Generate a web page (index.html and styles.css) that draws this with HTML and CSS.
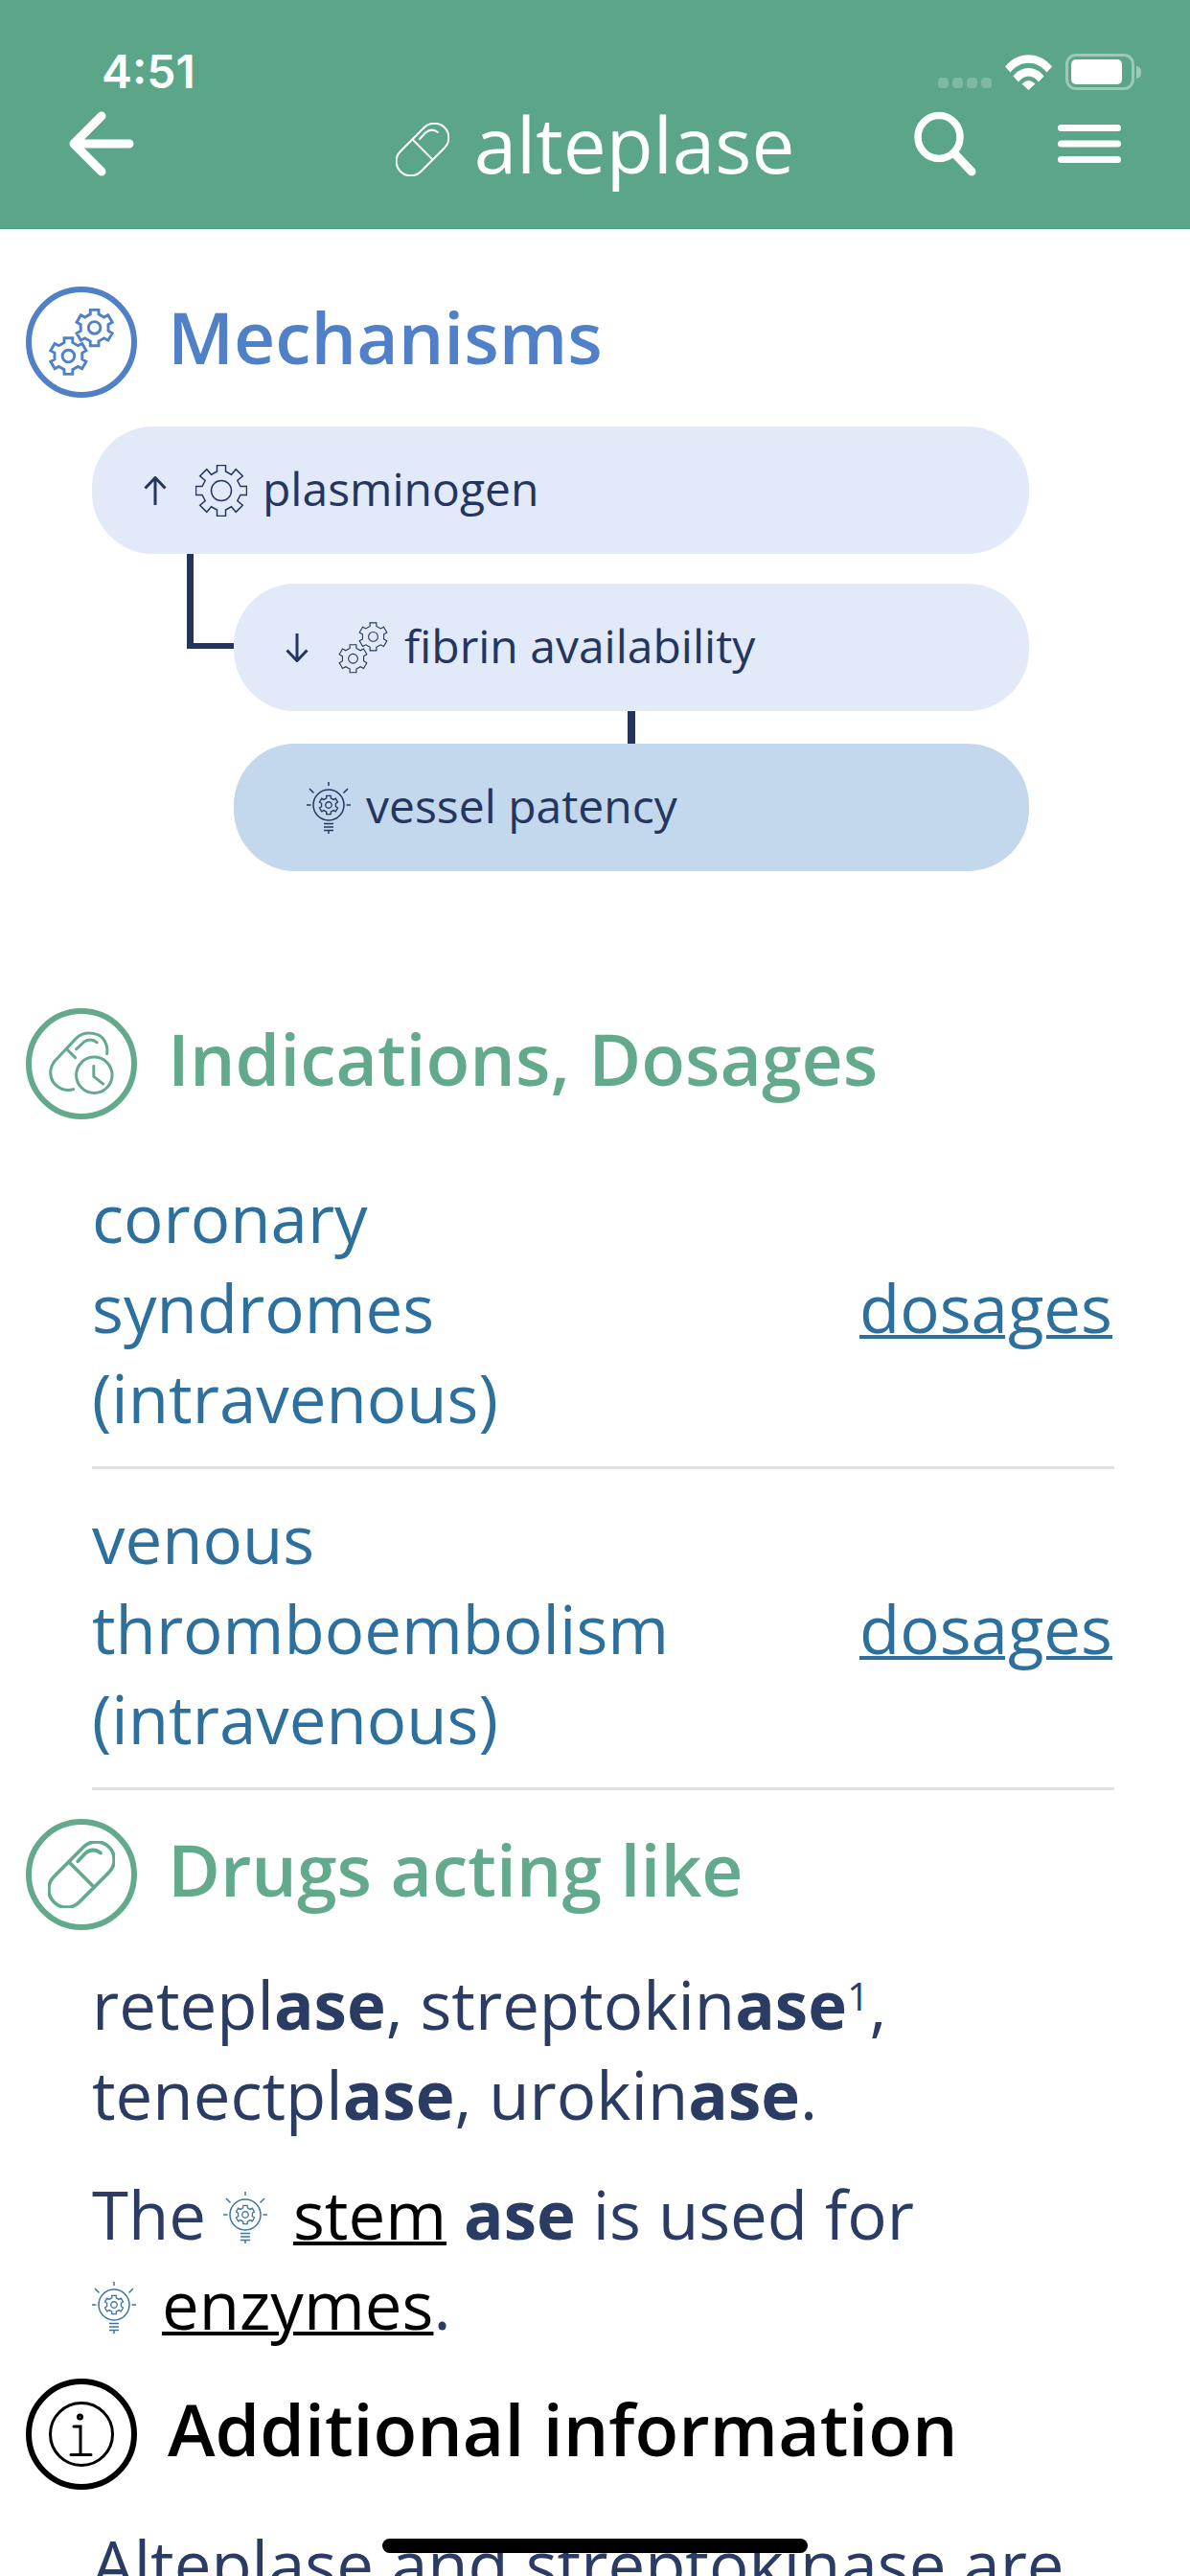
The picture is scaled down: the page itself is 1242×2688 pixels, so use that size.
FILE: index.html
```
<!DOCTYPE html>
<html lang="en">

<head>
    <meta charset="UTF-8">
    <meta name="viewport" content="width=device-width, initial-scale=1.0">
    <title>alteplase</title>
    <link rel="stylesheet" href="styles.css">
</head>

<body>
    <!-- shared icons -->
    <svg class="sprite" aria-hidden="true">
        <symbol id="cog" viewBox="-27 -27 54 54">
            <path d="M-4.5-26.5 4.5-26.5 4.5-20 10.5-16.8 15.2-22.3 22.3-15.2 16.8-10.5 20-4.5 26.5-4.5 26.5 4.5 20 4.5 16.8 10.5 22.3 15.2 15.2 22.3 10.5 16.8 4.5 20 4.5 26.5-4.5 26.5-4.5 20-10.5 16.8-15.2 22.3-22.3 15.2-16.8 10.5-20 4.5-26.5 4.5-26.5-4.5-20-4.5-16.8-10.5-22.3-15.2-15.2-22.3-10.5-16.8-4.5-20z" />
            <circle r="10.5" />
        </symbol>
        <symbol id="cogs" viewBox="0 0 70 72">
            <g id="small-cog" transform="translate(49 20.5)">
                <path d="M-4.5-19.3 4.5-19.3 4.5-14.5 10.3-11.2 14.6-13.6 19.1-5.9 14.8-3.4 14.8 3.4 19.1 5.9 14.6 13.6 10.3 11.2 4.5 14.5 4.5 19.3-4.5 19.3-4.5 14.5-10.3 11.2-14.6 13.6-19.1 5.9-14.8 3.4-14.8-3.4-19.1-5.9-14.6-13.6-10.3-11.2-4.5-14.5z" />
                <circle r="6.5" />
            </g>
            <use href="#small-cog" x="-28" y="30.5" />
        </symbol>
        <symbol id="bulb" viewBox="0 0 46 54">
            <circle cx="23" cy="24" r="16" />
            <path d="M23 0v4M3 7l4.5 4.5M43 7l-4.5 4.5M0 24h4.5M41.5 24h4.5M18 43.5h10M18 47h10M18 50.5h10M23 50.5v3.5" />
            <g transform="translate(23 24) scale(.5)" stroke-width="2.6">
                <path d="M-4.5-19.3 4.5-19.3 4.5-14.5 10.3-11.2 14.6-13.6 19.1-5.9 14.8-3.4 14.8 3.4 19.1 5.9 14.6 13.6 10.3 11.2 4.5 14.5 4.5 19.3-4.5 19.3-4.5 14.5-10.3 11.2-14.6 13.6-19.1 5.9-14.8 3.4-14.8-3.4-19.1-5.9-14.6-13.6-10.3-11.2-4.5-14.5z" />
                <circle r="6.5" />
            </g>
        </symbol>
        <symbol id="capsule" viewBox="0 0 56 56">
            <rect x="13" y="-4.5" width="30" height="65" rx="15" transform="rotate(45 28 28)" />
            <path d="M17.4 17.4l21.2 21.2M25 17l6-6.5q6.5-5.5 13-.5" />
        </symbol>
        <symbol id="dosage" viewBox="49 45 71 71">
            <path d="M111.5 70C113 60 108 52 101 49.5C92 46.5 84 48.5 79 53.5L56 78C50.5 85 50.5 94 55 100.5C60 107 68 110 76 107.5M70 66l8 8M79 65l8-7.5q7-5 14 .5" />
            <circle cx="98" cy="92.5" r="19" />
            <path d="M97.5 83v11l10 8" />
        </symbol>
        <symbol id="info" viewBox="-35 -35 70 70">
            <circle r="32.5" />
            <circle cx="-1.5" cy="-18" r="2" />
            <path d="M-8-8h7v29.5M-11 21.5h21" />
        </symbol>
    </svg>

    <div class="app">
        <header class="header">
            <div class="status">
                <span class="time">4:51</span>
                <div class="status-icons">
                    <span class="signal"><i></i><i></i><i></i><i></i></span>
                    <svg class="wifi" viewBox="0 0 49 37" aria-hidden="true">
                        <path d="M0 12.5C13-4 36-4 49 12.5L43.5 18.5C33 5.5 16 5.5 5.5 18.5z" />
                        <path d="M8.5 22.5C17 11 32 11 40.5 22.5L35 28.5C29 20.5 20 20.5 14 28.5z" />
                        <path d="M17.5 30.5Q24.5 23.5 31.5 30.5L24.5 37z" />
                    </svg>
                    <span class="battery"><span class="battery-level"></span></span>
                    <span class="battery-cap"></span>
                </div>
            </div>
            <nav class="nav">
                <button class="nav-button" aria-label="Back">
                    <svg width="68" height="68" viewBox="0 0 68 68"><path stroke-width="9" d="M63 34H5M34 5L5 34l29 29" /></svg>
                </button>
                <h1 class="title">
                    <svg class="title-icon"><use href="#capsule" /></svg>alteplase
                </h1>
                <div class="nav-actions">
                    <button class="nav-button" aria-label="Search">
                        <svg width="66" height="68" viewBox="0 0 66 68"><ellipse cx="26" cy="27" rx="22" ry="22.5" stroke-width="7.5" /><path stroke-width="9" d="M43 45l17 18" /></svg>
                    </button>
                    <button class="nav-button" aria-label="Menu">
                        <svg width="66" height="40" viewBox="0 0 66 40"><path stroke-width="7" d="M3.5 3.5h59M3.5 20h59M3.5 36.5h59" /></svg>
                    </button>
                </div>
            </nav>
        </header>

        <main class="content">
            <section class="mechanisms">
                <div class="section-head blue">
                    <span class="badge"><svg><use href="#cogs" /></svg></span>
                    <h2>Mechanisms</h2>
                </div>
                <div class="tree">
                    <div class="node">
                        <svg class="arrow" viewBox="0 0 24 30"><path d="M12 30V2M1.5 12.5L12 1.5l10.5 11" /></svg>
                        <svg class="node-icon"><use href="#cog" /></svg>
                        <span class="node-label">plasminogen</span>
                    </div>
                    <div class="branch">
                        <div class="elbow"></div>
                        <div class="branch-body">
                            <div class="node">
                                <svg class="arrow" viewBox="0 0 24 30"><path d="M12 0v28M1.5 17.5L12 28.5l10.5-11" /></svg>
                                <svg class="node-icon"><use href="#cogs" /></svg>
                                <span class="node-label">fibrin availability</span>
                            </div>
                            <div class="stem"></div>
                            <div class="node effect">
                                <svg class="bulb"><use href="#bulb" /></svg>
                                <span class="node-label">vessel patency</span>
                            </div>
                        </div>
                    </div>
                </div>
            </section>

            <section>
                <div class="section-head green">
                    <span class="badge"><svg><use href="#dosage" /></svg></span>
                    <h2>Indications, Dosages</h2>
                </div>
                <ul class="indications">
                    <li>
                        <a class="indication" href="#">coronary syndromes (intravenous)</a>
                        <a class="dosages" href="#">dosages</a>
                    </li>
                    <li>
                        <a class="indication" href="#">venous thromboembolism (intravenous)</a>
                        <a class="dosages" href="#">dosages</a>
                    </li>
                </ul>
            </section>

            <section>
                <div class="section-head green">
                    <span class="badge"><svg><use href="#capsule" /></svg></span>
                    <h2>Drugs acting like</h2>
                </div>
                <div class="text">
                    <p>retepl<b>ase</b>, streptokin<b>ase</b><sup>1</sup>, tenectpl<b>ase</b>, urokin<b>ase</b>.</p>
                    <p>The <svg class="bulb inline"><use href="#bulb" /></svg> <a href="#">stem</a> <b>ase</b> is used for<br>
                        <svg class="bulb inline"><use href="#bulb" /></svg> <a href="#">enzymes</a>.</p>
                </div>
            </section>

            <section>
                <div class="section-head black">
                    <span class="badge"><svg><use href="#info" /></svg></span>
                    <h2>Additional information</h2>
                </div>
                <div class="text">
                    <p>Alteplase and streptokinase are</p>
                </div>
            </section>
        </main>

        <div class="home-indicator"></div>
    </div>
</body>

</html>
```
FILE: styles.css
```
* {
    box-sizing: border-box;
}

body {
    margin: 0;
    font-family: "Open Sans", "Noto Sans", sans-serif;
    font-size: 69px;
    line-height: 94px;
    color: #2b3c64;
    background: #fff;
}

.sprite {
    position: absolute;
    width: 0;
    height: 0;
}

svg {
    display: block;
    fill: none;
    stroke: currentColor;
}

.app {
    height: 100vh;
    overflow: hidden;
}

/* header */
.header {
    padding-bottom: 49px;
    background: #5ba688;
    border-bottom: 1px solid #42a07a;
    color: #fff;
}

.status {
    display: flex;
    justify-content: space-between;
    align-items: flex-end;
    height: 110px;
    padding: 0 51px 16px 106px;
}

.time {
    font-family: Inter, sans-serif;
    font-size: 48px;
    font-weight: 600;
    line-height: 38px;
}

.status-icons {
    display: flex;
    align-items: center;
}

.signal {
    display: flex;
    gap: 4px;
    align-self: flex-end;
    padding-bottom: 2px;
    margin-right: 14px;
}

.signal i {
    width: 11px;
    height: 11px;
    border-radius: 4px;
    background: #7fb9a3;
}

.wifi {
    width: 49px;
    height: 37px;
    margin-right: 14px;
    fill: #fff;
    stroke: none;
}

.battery {
    width: 72px;
    height: 38px;
    padding: 3px;
    border: 3px solid #9dcab8;
    border-radius: 11px;
}

.battery-level {
    display: block;
    width: 53px;
    height: 26px;
    border-radius: 5px;
    background: #fff;
}

.battery-cap {
    width: 5px;
    height: 13px;
    margin-left: 2px;
    border-radius: 0 5px 5px 0;
    background: #9dcab8;
}

.nav {
    display: grid;
    grid-template-columns: 1fr auto 1fr;
    align-items: center;
    height: 79px;
    padding: 0 72px;
}

.nav-button {
    padding: 0;
    border: none;
    background: none;
    color: inherit;
    justify-self: start;
}

.nav-button svg {
    stroke-linecap: round;
    stroke-linejoin: round;
}

.nav-actions {
    display: flex;
    align-items: center;
    justify-content: flex-end;
    gap: 84px;
}

.title {
    display: flex;
    align-items: center;
    gap: 26px;
    margin: 0;
    font-size: 80px;
    font-weight: 400;
    line-height: 79px;
}

.title-icon {
    width: 56px;
    height: 56px;
    margin-top: 12px;
    stroke-width: 2;
    stroke-linecap: round;
}

/* sections */
.content {
    padding-top: 60px;
}

.section-head {
    display: flex;
    align-items: center;
    gap: 32px;
    height: 116px;
    margin: 30px 0;
    padding-left: 27px;
}

.section-head h2 {
    margin: 0;
    padding-bottom: 12px;
    font-size: 75px;
    font-weight: 600;
}

.mechanisms .section-head {
    margin-top: 0;
}

.badge {
    display: flex;
    align-items: center;
    justify-content: center;
    width: 116px;
    height: 116px;
    border: 6px solid;
    border-radius: 50%;
}

.badge svg {
    width: 70px;
    height: 70px;
    stroke-width: 3;
    stroke-linecap: round;
}

.blue {
    color: #5080c8;
}

.green {
    color: #63a98b;
}

.black {
    color: #000;
}

/* mechanism tree */
.tree {
    margin-bottom: 143px;
    padding: 0 168px 0 96px;
    font-size: 48px;
    color: #243660;
}

.node {
    display: flex;
    align-items: center;
    gap: 16px;
    height: 133px;
    padding-left: 54px;
    border-radius: 64px;
    background: #e2e9f8;
}

.node.effect {
    padding-left: 76px;
    background: #c3d8ec;
}

.node-label {
    padding-bottom: 3px;
}

.node-icon {
    width: 54px;
    height: 54px;
    stroke-width: 1.5;
}

.arrow {
    width: 24px;
    height: 30px;
    margin-right: 14px;
    stroke-width: 3;
}

.bulb {
    width: 46px;
    height: 54px;
    stroke-width: 1.5;
}

.branch {
    display: flex;
}

.branch-body {
    flex: 1;
    padding-top: 31px;
}

.elbow {
    width: 49px;
    height: 99px;
    margin-left: 99px;
    border-left: 7px solid #24345e;
    border-bottom: 6px solid #24345e;
}

.stem {
    width: 8px;
    height: 34px;
    margin: 0 auto;
    background: #24345e;
}

/* indications */
.indications {
    margin: 0 79px 0 96px;
    padding: 0;
    list-style: none;
}

.indications li {
    display: flex;
    align-items: center;
    justify-content: space-between;
    padding: 25px 2px 25px 0;
    border-bottom: 3px solid #e0e0e0;
}

.indications a {
    color: #2d709d;
}

.indication {
    width: 60%;
    text-decoration: none;
}

.dosages,
.text a {
    text-decoration-thickness: 4px;
}

/* text */
.text {
    padding: 0 96px;
}

.text p {
    margin: 0 0 31px;
}

.text a {
    color: #000;
}

.text sup {
    font-size: 41px;
    line-height: 0;
    vertical-align: 20px;
}

.inline {
    display: inline-block;
    margin-right: 9px;
    vertical-align: -4px;
    color: #3f749f;
}

.home-indicator {
    position: fixed;
    left: 50%;
    bottom: 24px;
    width: 444px;
    height: 15px;
    margin-left: -222px;
    border-radius: 8px;
    background: #000;
}
```
